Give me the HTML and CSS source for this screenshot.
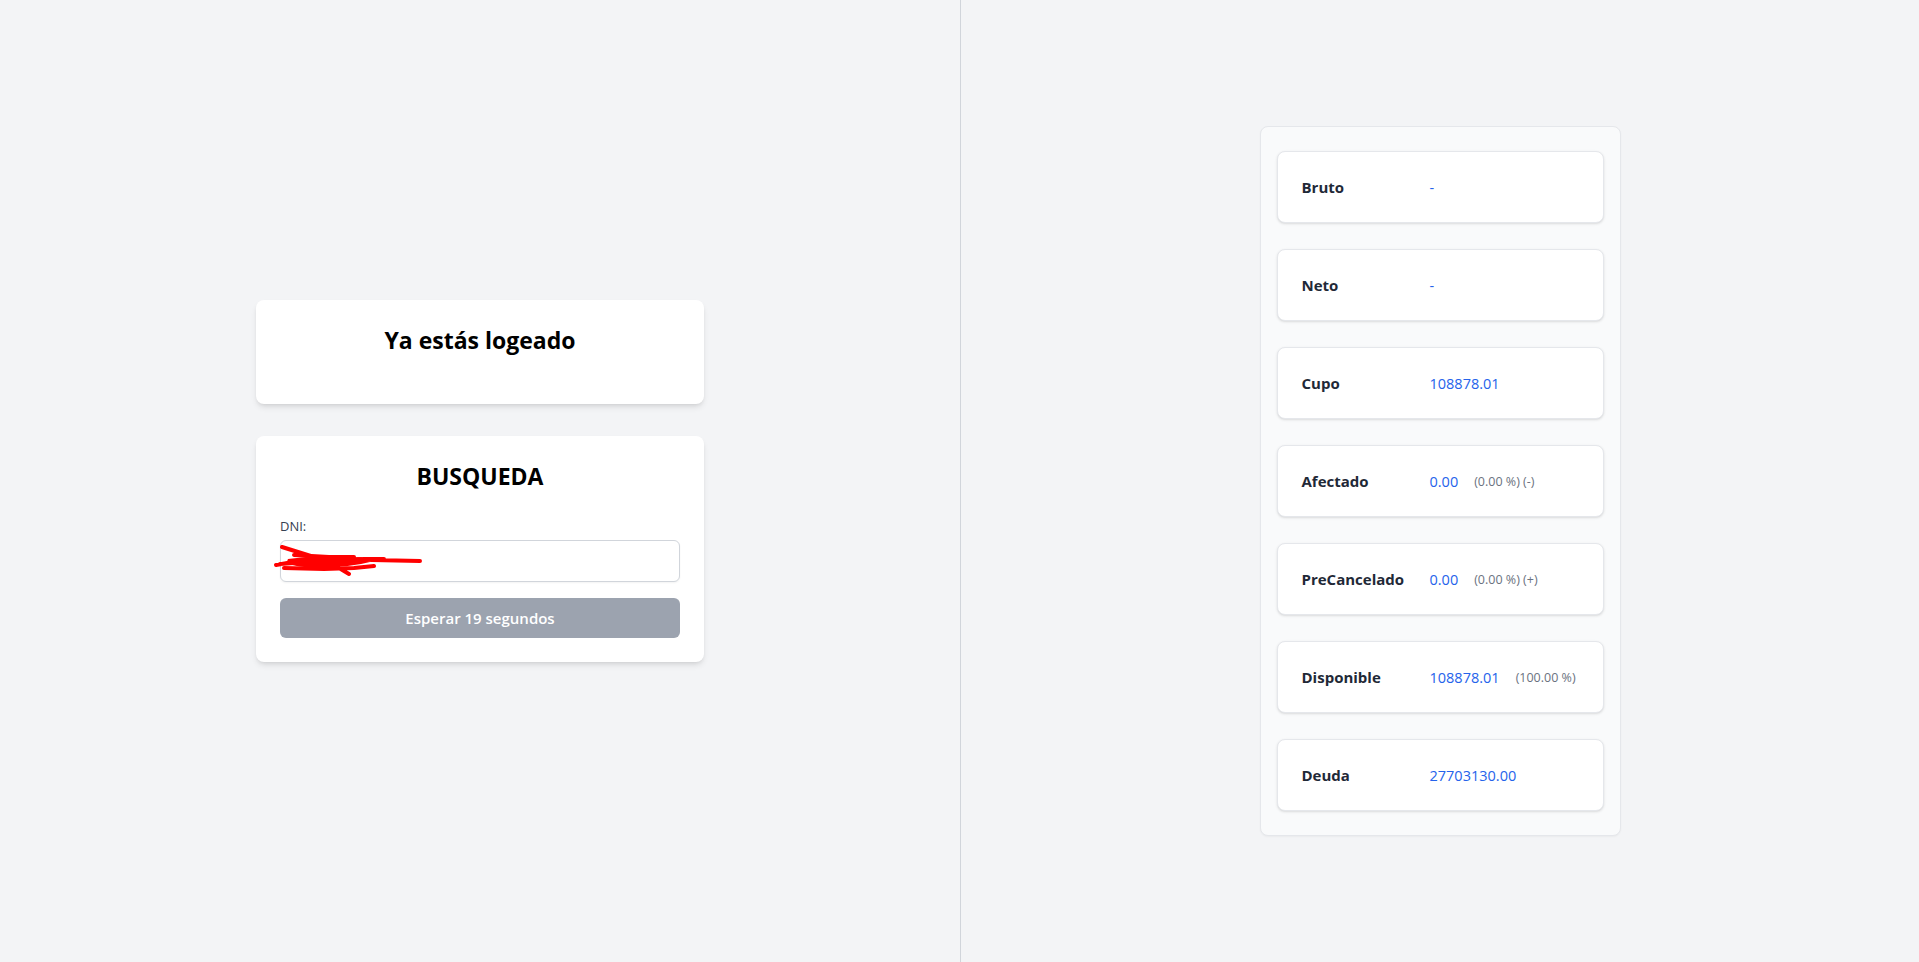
FILE: index.html
```html
<!DOCTYPE html>
<html lang="es">
<head>
<meta charset="utf-8">
<title>Consulta</title>
<link rel="stylesheet" href="styles.css">
</head>
<body>
<main class="layout">
  <section class="col col-left">
    <div class="stack">
      <div class="card">
        <h2 class="card-title">Ya estás logeado</h2>
      </div>
      <div class="card">
        <h2 class="card-title">BUSQUEDA</h2>
        <label class="field-label" for="dni">DNI:</label>
        <div class="input-wrap">
          <input id="dni" class="input" type="text">
          <svg class="scribble" width="150" height="34" viewBox="0 0 150 34">
            <path d="M8 4 L40 14 M2 22 L30 17 L60 15 L98 17 L146 18 M6 21 L48 18 L90 16 L110 16 M10 25 L50 26 L80 25 L100 23 M60 22 L75 31 M20 12 L55 14 L80 14" stroke="#ff0000" stroke-width="4" stroke-linecap="round" fill="none"/>
            <path d="M14 16 Q40 12 70 14 Q90 16 96 19 Q70 26 30 24 Q10 22 14 16 Z" fill="#ff0000"/>
          </svg>
        </div>
        <button class="btn" disabled>Esperar 19 segundos</button>
      </div>
    </div>
  </section>
  <div class="divider"></div>
  <section class="col col-right">
    <div class="panel">
      <div class="row"><span class="row-label">Bruto</span><span class="row-value">-</span></div>
      <div class="row"><span class="row-label">Neto</span><span class="row-value">-</span></div>
      <div class="row"><span class="row-label">Cupo</span><span class="row-value">108878.01</span></div>
      <div class="row"><span class="row-label">Afectado</span><span class="row-value">0.00</span><span class="row-extra">(0.00 %) (-)</span></div>
      <div class="row"><span class="row-label">PreCancelado</span><span class="row-value">0.00</span><span class="row-extra">(0.00 %) (+)</span></div>
      <div class="row"><span class="row-label">Disponible</span><span class="row-value">108878.01</span><span class="row-extra">(100.00 %)</span></div>
      <div class="row"><span class="row-label">Deuda</span><span class="row-value">27703130.00</span></div>
    </div>
  </section>
</main>
</body>
</html>
```

FILE: styles.css
```css
* { box-sizing: border-box; }
html, body { margin: 0; padding: 0; }
body {
  background: #f3f4f6;
  font-family: "Open Sans", "Noto Sans", "Liberation Sans", sans-serif;
  color: #111827;
}
.layout {
  display: grid;
  grid-template-columns: 960px 1px 1fr;
  height: 962px;
}
.col {
  display: flex;
  align-items: center;
  justify-content: center;
}
.divider { background: #d1d5db; }
.stack {
  width: 448px;
  display: flex;
  flex-direction: column;
  gap: 32px;
}
.card {
  background: #fff;
  border-radius: 8px;
  box-shadow: 0 4px 6px -1px rgba(0,0,0,0.1), 0 2px 4px -2px rgba(0,0,0,0.1);
  padding: 24px;
  display: flex;
  flex-direction: column;
}
.card-title {
  margin: 0 0 24px;
  font-size: 23px;
  line-height: 32px;
  font-weight: 700;
  text-align: center;
  color: #000;
}
.field-label {
  font-size: 13px;
  line-height: 20px;
  color: #374151;
  margin-bottom: 4px;
}
.input-wrap { position: relative; }
.input {
  display: block;
  width: 100%;
  height: 42px;
  border: 1px solid #d1d5db;
  border-radius: 6px;
  box-shadow: 0 1px 2px rgba(0,0,0,0.05);
  background: #fff;
  font: inherit;
  padding: 0 12px;
}
.scribble {
  position: absolute;
  left: -6px;
  top: 3px;
}
.btn {
  margin-top: 16px;
  height: 40px;
  border: 0;
  border-radius: 6px;
  background: #9ca3af;
  color: #fff;
  font-family: inherit;
  font-size: 15px;
  font-weight: 600;
}
.panel {
  width: 361px;
  background: #f9fafb;
  border: 1px solid #e5e7eb;
  border-radius: 8px;
  padding: 24px 16px;
  display: flex;
  flex-direction: column;
  gap: 26px;
  box-shadow: 0 1px 2px rgba(0,0,0,0.04);
}
.row {
  height: 72px;
  background: #fff;
  border: 1px solid #e5e7eb;
  border-radius: 8px;
  box-shadow: 0 1px 3px rgba(0,0,0,0.1), 0 1px 2px -1px rgba(0,0,0,0.1);
  display: flex;
  align-items: center;
  padding: 0 24px;
  white-space: nowrap;
}
.row-label {
  width: 128px;
  flex-shrink: 0;
  font-size: 15px;
  font-weight: 700;
  color: #1f2937;
}
.row-value {
  font-size: 14.5px;
  font-weight: 500;
  color: #2563eb;
  flex-shrink: 0;
}
.row-extra {
  margin-left: 16px;
  font-size: 12.5px;
  color: #6b7280;
  flex-shrink: 0;
}
```
